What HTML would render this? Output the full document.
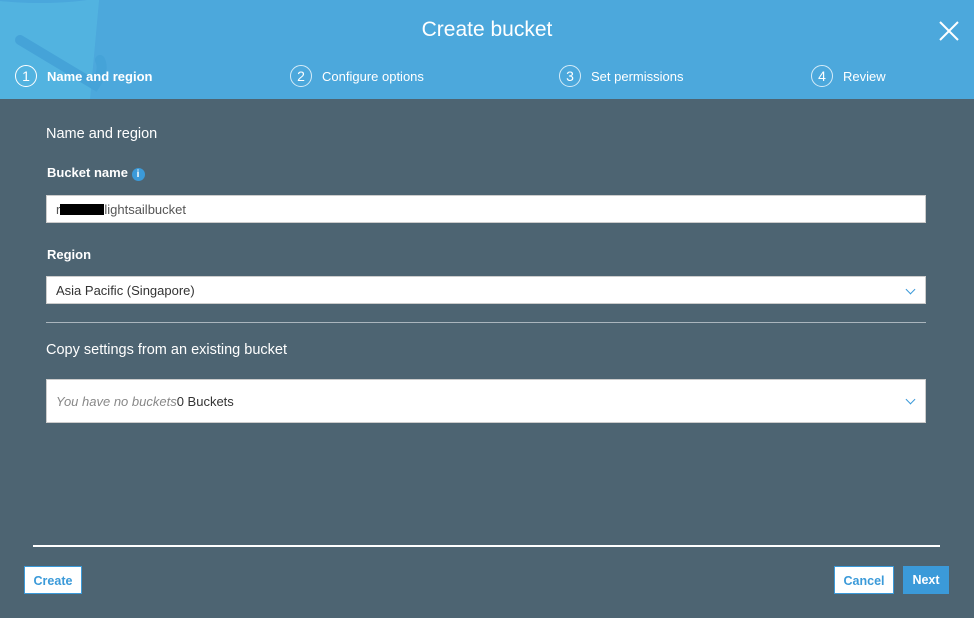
<!DOCTYPE html>
<html><head><style>
body{margin:0;width:974px;height:618px;background:#4d6472;font-family:"Liberation Sans",sans-serif;position:relative;overflow:hidden}
.hdr{position:absolute;left:0;top:0;width:974px;height:99px;background:#4ca8dc;overflow:hidden}
.t{position:absolute;top:18px;width:974px;text-align:center;color:#fff;font-size:21px}
.step{position:absolute;top:65px;color:#fff;font-size:13px;display:flex;align-items:center}
.c{width:20px;height:20px;border:1.5px solid #fff;border-radius:50%;text-align:center;line-height:20px;font-size:14px;margin-right:10px}
.lbl{position:absolute;left:47px;color:#fff;font-size:13px;font-weight:bold}
.h{position:absolute;left:46px;color:#fff;font-size:14.5px}
.inp{position:absolute;left:46px;width:880px;background:#fff;border:1px solid #ccc;font-size:13px;color:#333;box-sizing:border-box;padding-left:9px}
.chev{position:absolute;right:11px;width:6px;height:6px;border-right:1.5px solid #3b9ad9;border-bottom:1.5px solid #3b9ad9;transform:rotate(45deg)}
.btn{position:absolute;top:566px;height:28px;line-height:28px;font-size:12.5px;font-weight:bold;text-align:center;box-sizing:border-box}
</style></head><body>
<div class="hdr">
<svg width="330" height="100" style="position:absolute;left:0;top:0"><path d="M-10 -10 L100 -10 L90 100 L-10 100Z" fill="#52b3e0"/><ellipse cx="40" cy="-5" rx="60" ry="8" fill="#4aa7dc"/><path d="M20 40 L95 85 Q105 70 100 60" stroke="#45a3d8" stroke-width="10" fill="none" stroke-linecap="round"/></svg>
<div class="t">Create bucket</div>
<div class="step" style="left:15px"><div class="c">1</div><b>Name and region</b></div>
<div class="step" style="left:290px"><div class="c" style="border-color:#d6ecf8">2</div>Configure options</div>
<div class="step" style="left:559px"><div class="c" style="border-color:#d6ecf8">3</div>Set permissions</div>
<div class="step" style="left:811px"><div class="c" style="border-color:#d6ecf8">4</div>Review</div>
<svg width="22" height="22" style="position:absolute;left:938px;top:20px"><path d="M2 2L20 20M20 2L2 20" stroke="#fff" stroke-width="2"/></svg>
</div>
<div class="h" style="top:126px">Name and region</div>
<div class="lbl" style="top:165px">Bucket name <span style="display:inline-block;width:13px;height:13px;border-radius:50%;background:#3b9ad9;color:#fff;font-size:10px;text-align:center;line-height:13px;vertical-align:0px">i</span></div>
<div class="inp" style="top:195px;height:28px;line-height:27px;color:#555">r<span style="display:inline-block;width:44px;height:11px;background:#000;vertical-align:-1px"></span>lightsailbucket</div>
<div class="lbl" style="top:247px">Region</div>
<div class="inp" style="top:276px;height:28px;line-height:28px">Asia Pacific (Singapore)<div class="chev" style="top:9px"></div></div>
<div style="position:absolute;left:46px;top:322px;width:880px;height:1px;background:#aab5bd"></div>
<div class="h" style="top:342px">Copy settings from an existing bucket</div>
<div class="inp" style="top:379px;height:44px;line-height:43px"><i style="color:#888">You have no buckets</i>0 Buckets<div class="chev" style="top:16px"></div></div>
<div style="position:absolute;left:33px;top:545px;width:907px;height:2px;background:#fff"></div>
<div class="btn" style="left:24px;width:58px;background:#fff;border:1px solid #3b9ad9;color:#3b9ad9">Create</div>
<div class="btn" style="left:834px;width:60px;background:#fff;border:1px solid #3b9ad9;color:#3b9ad9">Cancel</div>
<div class="btn" style="left:903px;width:46px;background:#3b9ad9;color:#fff">Next</div>
</body></html>
